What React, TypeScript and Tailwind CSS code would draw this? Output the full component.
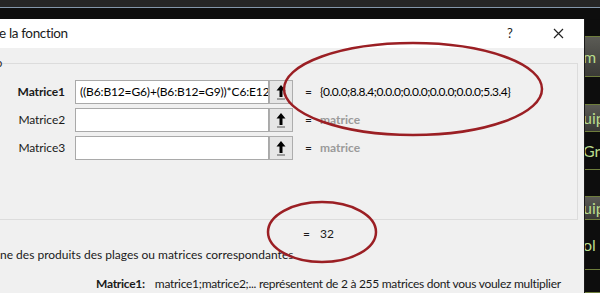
import React from 'react';

const ArgRow = ({ label, value, bold, result, muted }: { label: string; value?: string; bold?: boolean; result: string; muted?: boolean }) => (
  <div className="flex items-center h-[24px]">
    <div className={`w-[66px] text-right pr-[1px] text-[12px] tracking-[-0.1px] text-[#1a1a1a] ${bold ? 'font-bold' : ''}`}>{label}</div>
    <div className="ml-[9px] w-[194px] h-[24px] bg-white border border-[#a9a9a9] flex items-center pl-[4px] text-[12px] tracking-[-0.15px] text-black whitespace-nowrap overflow-hidden">
      {value}
      {value && <span className="inline-block w-px h-[15px] bg-black ml-[1px]" />}
    </div>
    <div className="w-[24px] h-[24px] bg-[#e6e6e6] border border-[#adadad] flex items-center justify-center">
      <svg width="12" height="16" viewBox="0 0 12 16">
        <path d="M6 1 L1.5 6.5 H4.5 V13 H7.5 V6.5 H10.5 Z" fill="#000" />
        <rect x="2" y="14.5" width="8" height="1" fill="#555" />
      </svg>
    </div>
    <div className="ml-[12px] text-[12px] text-[#1a1a1a]">=</div>
    <div className={`ml-[8px] text-[12px] whitespace-nowrap ${muted ? 'font-bold text-[#9a9a9a]' : 'text-black tracking-[-0.5px]'}`}>{result}</div>
  </div>
);

const StripCell = ({ text, gray, h }: { text?: string; gray?: boolean; h: number }) => (
  <div
    className={`border-b border-[#6e7d3c] flex items-center overflow-hidden text-[16px] text-[#b9dc8c] whitespace-nowrap ${gray ? 'bg-gradient-to-b from-[#5b5b55] to-[#3a3a36]' : 'bg-[#0d0d0d]'}`}
    style={{ height: h }}
  >
    {text && <span className="-ml-[2px]">{text}</span>}
  </div>
);

export default function App() {
  return (
    <div className="w-[600px] h-[293px] overflow-hidden bg-[#0d0d0d] relative font-['Lato',sans-serif]">
      <div className="h-[7px] bg-[#262626]" />
      <div className="h-px bg-[#8497ab]" />
      <div className="h-[11px] bg-[#0e0e0e]" />
      <div className="flex h-[274px]">
        <div className="w-[584px] flex flex-col">
          <div className="h-[29px] bg-white flex items-center relative shrink-0">
            <span className="text-[13.5px] tracking-[-0.35px] text-[#1a1a1a] -ml-[1px]">e la fonction</span>
            <span className="absolute left-[507px] text-[13px] text-[#222]">?</span>
            <svg className="absolute left-[553px]" width="11" height="11" viewBox="0 0 11 11">
              <path d="M1 1 L10 10 M10 1 L1 10" stroke="#222" strokeWidth="1.2" />
            </svg>
          </div>
          <div className="flex-1 bg-[#f0f0f0] flex flex-col">
            <div className="mt-[15px] w-[578px] h-[157px] border-t border-r border-b border-[#dcdcdc] relative pt-[16px] flex flex-col gap-[4px]">
              <span className="absolute -top-[7px] -left-[4px] text-[11px] leading-none bg-[#f0f0f0] text-[#222]">o</span>
              <ArgRow label="Matrice1" bold value="((B6:B12=G6)+(B6:B12=G9))*C6:E12" result="{0.0.0;8.8.4;0.0.0;0.0.0;0.0.0;0.0.0;5.3.4}" />
              <ArgRow label="Matrice2" result="matrice" muted />
              <ArgRow label="Matrice3" result="matrice" muted />
            </div>
            <div className="flex items-center h-[16px] mt-[6px] text-[12px] text-[#1a1a1a]">
              <span className="ml-[303px]">=</span>
              <span className="ml-[10px]">32</span>
            </div>
            <div className="mt-[4px] text-[12px] text-[#1a1a1a] whitespace-nowrap">ne des produits des plages ou matrices correspondantes.</div>
            <div className="mt-[11px] flex text-[12px] tracking-[-0.28px] text-[#1a1a1a] whitespace-nowrap">
              <span className="ml-[96px] font-bold">Matrice1:</span>
              <span className="ml-[10px]">matrice1;matrice2;... représentent de 2 à 255 matrices dont vous voulez multiplier</span>
            </div>
          </div>
        </div>
        <div className="w-[16px] flex flex-col border-l border-[#1a1a1a]">
          <StripCell h={18} />
          <StripCell gray text="m" h={40} />
          <StripCell h={28} />
          <StripCell gray text="uip" h={27} />
          <StripCell text="Gri" h={38} />
          <StripCell h={27} />
          <StripCell gray text="uip" h={23} />
          <StripCell text="ol" h={50} />
          <StripCell h={23} />
        </div>
      </div>
      <svg className="absolute inset-0 pointer-events-none" width="600" height="293">
        <ellipse cx="413" cy="89" rx="129" ry="46" fill="none" stroke="#9b1f24" strokeWidth="2.5" />
        <ellipse cx="322" cy="232" rx="54" ry="30" fill="none" stroke="#9b1f24" strokeWidth="2.5" />
      </svg>
    </div>
  );
}
